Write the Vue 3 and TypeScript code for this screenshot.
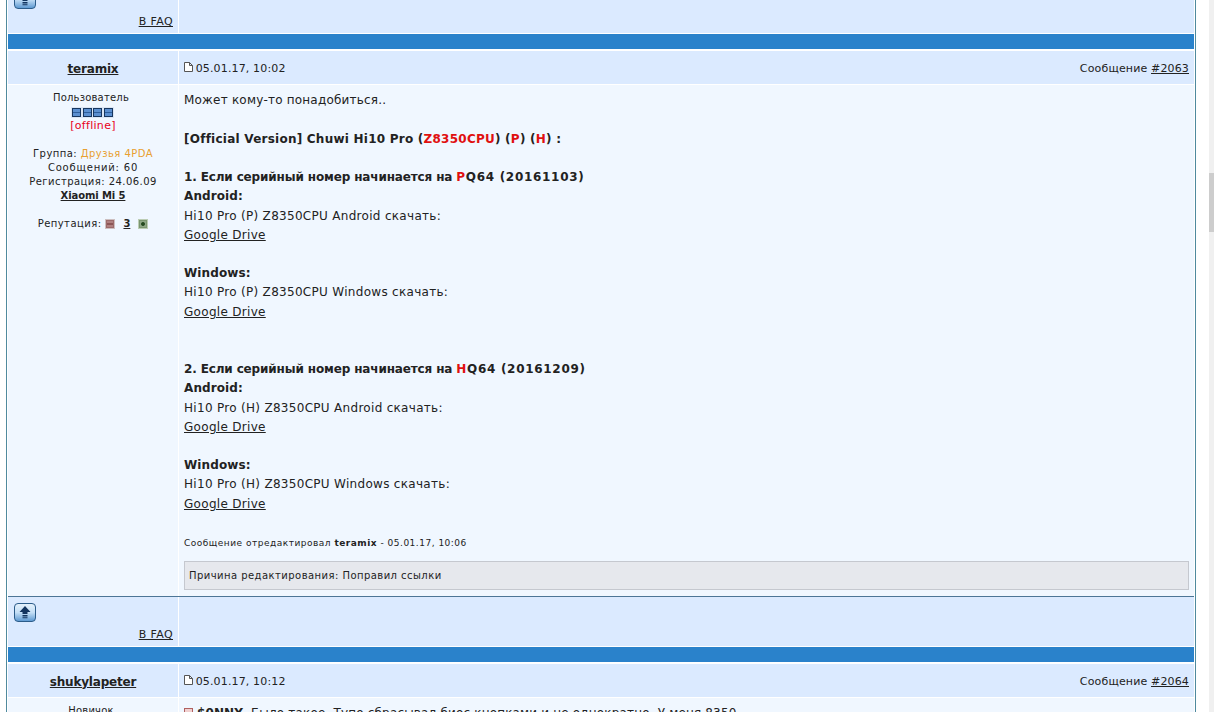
<script setup lang="ts">
interface Post {
  author: string;
  date: string;
  num: string;
}

const first: Post = { author: "teramix", date: "05.01.17, 10:02", num: "#2063" };
const second: Post = { author: "shukylapeter", date: "05.01.17, 10:12", num: "#2064" };
</script>

<template>
  <div class="page">
    <div class="forum">
      <!-- tail of the previous post -->
      <div class="row foot">
        <div class="cell left">
          <button type="button" class="up">
            <svg width="22" height="19" viewBox="0 0 22 19"><path d="M11 3 16.5 9H13.5V11H8.5V9H5.5ZM8.5 12H13.5V13.5H8.5ZM8.5 14.3H13.5V15.3H8.5Z" fill="#12345f" /></svg>
          </button>
          <a class="faq">В FAQ</a>
        </div>
        <div class="cell"></div>
      </div>
      <div class="bar"></div>

      <div class="row head">
        <div class="cell left name"><a>{{ first.author }}</a></div>
        <div class="cell head-main">
          <span class="date">
            <svg width="9" height="10" viewBox="0 0 9 10"><path d="M.5.5H5.5L8.5 3.5V9.5H.5ZM5.5.5V3.5H8.5" fill="#fff" stroke="#555" /></svg>
            {{ first.date }}
          </span>
          <span>Сообщение <a>{{ first.num }}</a></span>
        </div>
      </div>

      <div class="row body">
        <div class="cell left info">
          <div class="tight">Пользователь</div>
          <div class="pips"><i v-for="n in 4" :key="n"></i></div>
          <div class="offline">[offline]</div>
          <div class="gap">Группа: <span class="group">Друзья 4PDA</span></div>
          <div class="wide">Сообщений: 60</div>
          <div>Регистрация: 24.06.09</div>
          <div><a class="device">Xiaomi Mi 5</a></div>
          <div class="gap rep">
            <span>Репутация:</span>
            <span class="rep-btn minus"><i></i></span>
            <a class="device">3</a>
            <span class="rep-btn plus"><i></i></span>
          </div>
        </div>
        <div class="cell post">
          <div class="text">
            <span class="intro">Может кому-то понадобиться..</span><br /><br />
            <b class="title">[Official Version] Chuwi Hi10 Pro (<em>Z8350CPU</em>) (<em>P</em>) (<em>H</em>) :</b><br /><br />
            <b class="serial">1. Если серийный номер начинается на <span class="code"><em>P</em>Q64 (20161103)</span></b><br />
            <b>Android:</b><br />
            Hi10 Pro (P) Z8350CPU Android скачать:<br />
            <a>Google Drive</a><br /><br />
            <b>Windows:</b><br />
            Hi10 Pro (P) Z8350CPU Windows скачать:<br />
            <a>Google Drive</a><br /><br /><br />
            <b class="serial">2. Если серийный номер начинается на <span class="code"><em>H</em>Q64 (20161209)</span></b><br />
            <b>Android:</b><br />
            Hi10 Pro (H) Z8350CPU Android скачать:<br />
            <a>Google Drive</a><br /><br />
            <b>Windows:</b><br />
            Hi10 Pro (H) Z8350CPU Windows скачать:<br />
            <a>Google Drive</a>
          </div>
          <div class="edit">Сообщение отредактировал <b>teramix</b> - 05.01.17, 10:06</div>
          <div class="reason">Причина редактирования: Поправил ссылки</div>
        </div>
      </div>

      <div class="row foot ruled">
        <div class="cell left">
          <button type="button" class="up">
            <svg width="22" height="19" viewBox="0 0 22 19"><path d="M11 3 16.5 9H13.5V11H8.5V9H5.5ZM8.5 12H13.5V13.5H8.5ZM8.5 14.3H13.5V15.3H8.5Z" fill="#12345f" /></svg>
          </button>
          <a class="faq">В FAQ</a>
        </div>
        <div class="cell"></div>
      </div>
      <div class="bar"></div>

      <div class="row head">
        <div class="cell left name"><a>{{ second.author }}</a></div>
        <div class="cell head-main">
          <span class="date">
            <svg width="9" height="10" viewBox="0 0 9 10"><path d="M.5.5H5.5L8.5 3.5V9.5H.5ZM5.5.5V3.5H8.5" fill="#fff" stroke="#555" /></svg>
            {{ second.date }}
          </span>
          <span>Сообщение <a>{{ second.num }}</a></span>
        </div>
      </div>

      <div class="row body">
        <div class="cell left info"><div class="tight">Новичок</div></div>
        <div class="cell post">
          <div class="text last">
            <span class="quote-mark"></span> <b>$0NNY</b>, Было такое. Тупо сбрасывал биос кнопками и не однократно. У меня 8350
          </div>
        </div>
      </div>
    </div>
    <div class="scroll"><div class="thumb"></div></div>
  </div>
</template>

<style>
html,
body {
  margin: 0;
  height: 100%;
  overflow: hidden;
  background: #fff;
}
</style>

<style scoped>
.page {
  height: 712px;
  overflow: hidden;
  position: relative;
  font-family: "DejaVu Sans", Verdana, sans-serif;
  font-size: 12px;
  color: #222;
}

.forum {
  margin: -16px 0 0 6px;
  width: 1186px;
  padding: 0 1px;
  border-left: 1px solid #4f8a9e;
  border-right: 1px solid #4f8a9e;
  display: flex;
  flex-direction: column;
}

.row {
  display: grid;
  grid-template-columns: 170px 1015px;
  column-gap: 1px;
}

.bar {
  height: 15px;
  margin: 1px 0 2px;
  background: #2a82cb;
}

.foot {
  height: 49px;
}
.foot .cell {
  background: #dbeaff;
}
.foot .left {
  display: flex;
  flex-direction: column;
  align-items: flex-start;
  padding: 6px 5px 0 6px;
  box-sizing: border-box;
}
.ruled {
  border-top: 1px solid #4c7596;
}

.up {
  width: 22px;
  height: 19px;
  padding: 0;
  border: 1px solid #2b5c8a;
  border-radius: 4px;
  background: linear-gradient(#e4f1fc, #c4dff6 50%, #5f9ad2);
  display: block;
}
.up svg {
  display: block;
  margin: -1px;
}

.faq {
  align-self: flex-end;
  margin-top: 6px;
  font-size: 11px;
  letter-spacing: 0.4px;
  text-decoration: underline;
}

.head {
  height: 33px;
}
.head .cell {
  background: #dbeaff;
  padding-top: 2px;
  box-sizing: border-box;
}
.name {
  display: flex;
  align-items: center;
  justify-content: center;
  font-size: 12px;
  font-weight: bold;
  letter-spacing: -0.2px;
}
.name a,
.head-main a,
.post a {
  text-decoration: underline;
}
.head-main {
  display: flex;
  align-items: center;
  justify-content: space-between;
  padding: 0 5px;
  font-size: 11px;
  letter-spacing: 0.15px;
}
.date svg {
  margin-right: -1px;
}

.body {
  margin-top: 1px;
}
.body .cell {
  background: #f0f7ff;
}

.info {
  padding-top: 6px;
  height: 505px;
  text-align: center;
  font-size: 10px;
  line-height: 14px;
  letter-spacing: 0.45px;
}
.tight {
  letter-spacing: 0.2px;
  padding-right: 4px;
}
.wide {
  letter-spacing: 0.8px;
}
.pips {
  display: flex;
  justify-content: center;
  gap: 1.6px;
  height: 14px;
  align-items: center;
  padding-right: 1px;
}
.pips i {
  width: 9px;
  height: 9px;
  box-sizing: border-box;
  background: linear-gradient(#5b8fd0 0 40%, #2f5f9c 40% 60%, #5b8fd0 60%);
  border: 1px solid #17365f;
  box-shadow: 0 0 0 1px #dbe6f5;
}
.offline {
  color: #e8001a;
  font-size: 11px;
  letter-spacing: 0.3px;
}
.gap {
  margin-top: 14px;
}
.group {
  color: #e8a030;
}
.device {
  font-weight: bold;
  letter-spacing: -0.1px;
  text-decoration: underline;
}
.rep {
  display: flex;
  justify-content: center;
  align-items: center;
  gap: 8px;
}
.rep-btn {
  width: 10px;
  height: 10px;
  box-sizing: border-box;
  display: flex;
  align-items: center;
  justify-content: center;
  border: 1px solid #cdbfc0;
}
.rep-btn i {
  display: block;
  width: 8px;
  height: 8px;
  box-sizing: border-box;
  border: 1px solid #9c6a6a;
  background: linear-gradient(#b08080 0 35%, #8c5656 35% 65%, #b08080 65%);
}
.minus {
  margin-left: -4px;
}
.plus {
  border-color: #bccdb4;
}
.plus i {
  border-color: #7b9670;
  background: radial-gradient(circle, #24491f 0 35%, #8fa886 55%);
}

.post {
  padding: 6.4px 5px 0 5px;
  overflow: hidden;
}
.text {
  line-height: 19.2px;
  letter-spacing: 0.3px;
}
.text.last {
  letter-spacing: 0.17px;
}
.text b {
  letter-spacing: 0.1px;
}
.text .title {
  letter-spacing: 0.24px;
}
.text .serial {
  letter-spacing: -0.14px;
}
.text .code {
  letter-spacing: 0.7px;
}
.intro {
  letter-spacing: 0.2px;
}
.text em {
  font-style: normal;
  color: #e01010;
}
.edit {
  margin-top: 22.6px;
  font-size: 9px;
  line-height: 14px;
  letter-spacing: 0.5px;
}
.reason {
  margin-top: 11px;
  height: 29px;
  box-sizing: border-box;
  padding: 0 4px;
  border: 1px solid #c5c8cf;
  background: #e6e8ed;
  font-size: 10px;
  line-height: 27px;
  letter-spacing: 0.45px;
}
.quote-mark {
  display: inline-block;
  width: 9px;
  height: 9px;
  box-sizing: border-box;
  border: 1px solid #b06060;
  background: #f0d0d0;
}

.scroll {
  position: absolute;
  top: 0;
  right: 0;
  width: 5px;
  height: 712px;
  background: #f0f0f0;
}
.thumb {
  margin-top: 173px;
  height: 59px;
  background: #cdcdcd;
}
</style>
